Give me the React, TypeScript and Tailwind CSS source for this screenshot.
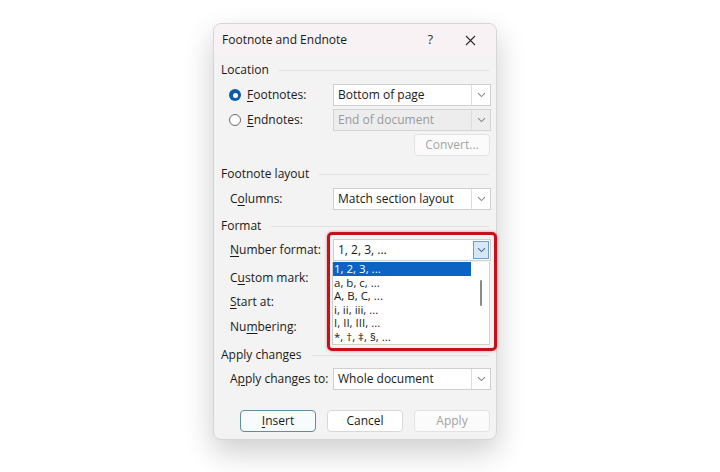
import React from "react";

const font = { fontFamily: '"Segoe UI", "Open Sans", "Noto Sans", sans-serif' };

function U({ children }: { children: React.ReactNode }) {
  return <span className="underline underline-offset-[2px] decoration-[1px]">{children}</span>;
}

function Chevron({ color = "#8a8a8a" }: { color?: string }) {
  return (
    <svg width="9" height="6" viewBox="0 0 9 6" fill="none">
      <path d="M1 1.2 L4.5 4.6 L8 1.2" stroke={color} strokeWidth="1.1" />
    </svg>
  );
}

function Select({ text, disabled = false, active = false }: { text: string; disabled?: boolean; active?: boolean }) {
  return (
    <div
      className={`flex h-[22px] w-[158px] items-stretch border ${
        disabled ? "border-[#d4d4d4] bg-[#ededed]" : "border-[#cfcfcf] bg-white"
      }`}
    >
      <div className={`flex flex-1 items-center pl-[4px] text-[12px] ${disabled ? "text-[#9a9a9a]" : "text-[#1a1a1a]"}`}>
        {text}
      </div>
      {active ? (
        <div className="m-[1px] flex w-[16px] items-center justify-center border border-[#6d9dc9] bg-[#d6e8f7]">
          <Chevron color="#4a6f90" />
        </div>
      ) : (
        <div className="flex w-[19px] items-center justify-center border-l border-[#dcdcdc]">
          <Chevron />
        </div>
      )}
    </div>
  );
}

function Section({ title }: { title: string }) {
  return (
    <div className="flex h-[16px] items-center pl-[7px] pr-[7px]">
      <span className="text-[12px] text-[#1a1a1a]">{title}</span>
      <div className="ml-[10px] h-px flex-1 bg-[#e0e0e0]" />
    </div>
  );
}

function Row({ label, children, mt }: { label: React.ReactNode; children?: React.ReactNode; mt: string }) {
  return (
    <div className={`flex h-[22px] items-center ${mt}`}>
      <div className="w-[119px] pl-[16px] text-[12px] text-[#1a1a1a]">{label}</div>
      {children}
    </div>
  );
}

function Btn({ children, kind }: { children: React.ReactNode; kind: "primary" | "normal" | "disabled" }) {
  const cls =
    kind === "primary"
      ? "border-[1.5px] border-[#5e8fa6] bg-[#f8fbfc] text-[#1a1a1a]"
      : kind === "normal"
      ? "border border-[#d8d8d8] bg-white text-[#1a1a1a]"
      : "border border-[#e2e2e2] bg-[#fbfbfb] text-[#a3a3a3]";
  return (
    <div className={`flex h-[22px] w-[76px] items-center justify-center rounded-[4px] text-[12px] ${cls}`}>{children}</div>
  );
}

export default function App() {
  const items = ["1, 2, 3, ...", "a, b, c, ...", "A, B, C, ...", "i, ii, iii, ...", "I, II, III, ...", "*, †, ‡, §, ..."];
  return (
    <div className="h-[472px] w-[720px] overflow-hidden bg-white pl-[213px] pt-[23px]" style={font}>
      <div className="relative h-[417px] w-[284px] rounded-[8px] border border-[#d6d6d6] bg-[#f3f3f3] shadow-[0_12px_30px_rgba(0,0,0,0.2)]">
        {/* title bar */}
        <div className="flex h-[32px] items-center rounded-t-[8px] bg-[#f8f2f5] pl-[8px]">
          <span className="text-[12px] text-[#1a1a1a]">Footnote and Endnote</span>
          <span className="ml-auto mr-[32px] text-[13px] text-[#333]">?</span>
          <svg className="mr-[20px]" width="11" height="11" viewBox="0 0 11 11">
            <path d="M1 1 L10 10 M10 1 L1 10" stroke="#2a2a2a" strokeWidth="1.1" />
          </svg>
        </div>

        <div className="mt-[6px]">
          <Section title="Location" />
        </div>

        <div className="mt-[6px] flex h-[22px] items-center">
          <div className="flex w-[119px] items-center pl-[15px]">
            <div className="flex h-[12px] w-[12px] items-center justify-center rounded-full bg-[#0b5cab]">
              <div className="h-[5px] w-[5px] rounded-full bg-white" />
            </div>
            <span className="ml-[6px] text-[12px] text-[#1a1a1a]">
              <U>F</U>ootnotes:
            </span>
          </div>
          <Select text="Bottom of page" />
        </div>

        <div className="mt-[3px] flex h-[22px] items-center">
          <div className="flex w-[119px] items-center pl-[15px]">
            <div className="h-[12px] w-[12px] rounded-full border border-[#6a6a6a] bg-white" />
            <span className="ml-[6px] text-[12px] text-[#1a1a1a]">
              <U>E</U>ndnotes:
            </span>
          </div>
          <Select text="End of document" disabled />
        </div>

        <div className="mt-[3px] flex pl-[200px]">
          <Btn kind="disabled">Convert...</Btn>
        </div>

        <div className="mt-[10px]">
          <Section title="Footnote layout" />
        </div>

        <Row mt="mt-[6px]" label={<>C<U>o</U>lumns:</>}>
          <Select text="Match section layout" />
        </Row>

        <div className="mt-[8px]">
          <Section title="Format" />
        </div>

        <Row mt="mt-[5px]" label={<><U>N</U>umber format:</>}>
          <Select text="1, 2, 3, ..." active />
        </Row>
        <Row mt="mt-[6px]" label={<>C<U>u</U>stom mark:</>} />
        <Row mt="mt-[2px]" label={<><U>S</U>tart at:</>} />
        <Row mt="mt-[3px]" label={<>Nu<U>m</U>bering:</>} />

        <div className="mt-[9px]">
          <Section title="Apply changes" />
        </div>

        <Row mt="mt-[5px]" label={<>A<U>p</U>ply changes to:</>}>
          <Select text="Whole document" />
        </Row>

        <div className="mt-[20px] flex gap-[11px] pl-[26px]">
          <Btn kind="primary">
            <U>I</U>nsert
          </Btn>
          <Btn kind="normal">Cancel</Btn>
          <Btn kind="disabled">Apply</Btn>
        </div>

        {/* dropdown list overlay */}
        <div className="absolute left-[118px] top-[238px] h-[83px] w-[158px] overflow-hidden border border-[#cfcfcf] border-t-0 bg-white">
          {items.map((t, i) => (
            <div
              key={t}
              className={`flex h-[13.5px] items-center pl-[1px] text-[11.5px] leading-none ${
                i === 0 ? "mr-[18px] bg-[#0b63c4] text-white" : "text-[#1a1a1a]"
              }`}
            >
              {t}
            </div>
          ))}
          <div className="absolute right-[7px] top-[18px] h-[26px] w-[2px] rounded bg-[#8a8a8a]" />
        </div>

        {/* red annotation box */}
        <div className="absolute left-[113px] top-[208px] h-[119px] w-[170px] rounded-[5px] border-[3px] border-[#c8101a] shadow-[0_0_3px_rgba(200,16,26,0.5)]" />
      </div>
    </div>
  );
}
